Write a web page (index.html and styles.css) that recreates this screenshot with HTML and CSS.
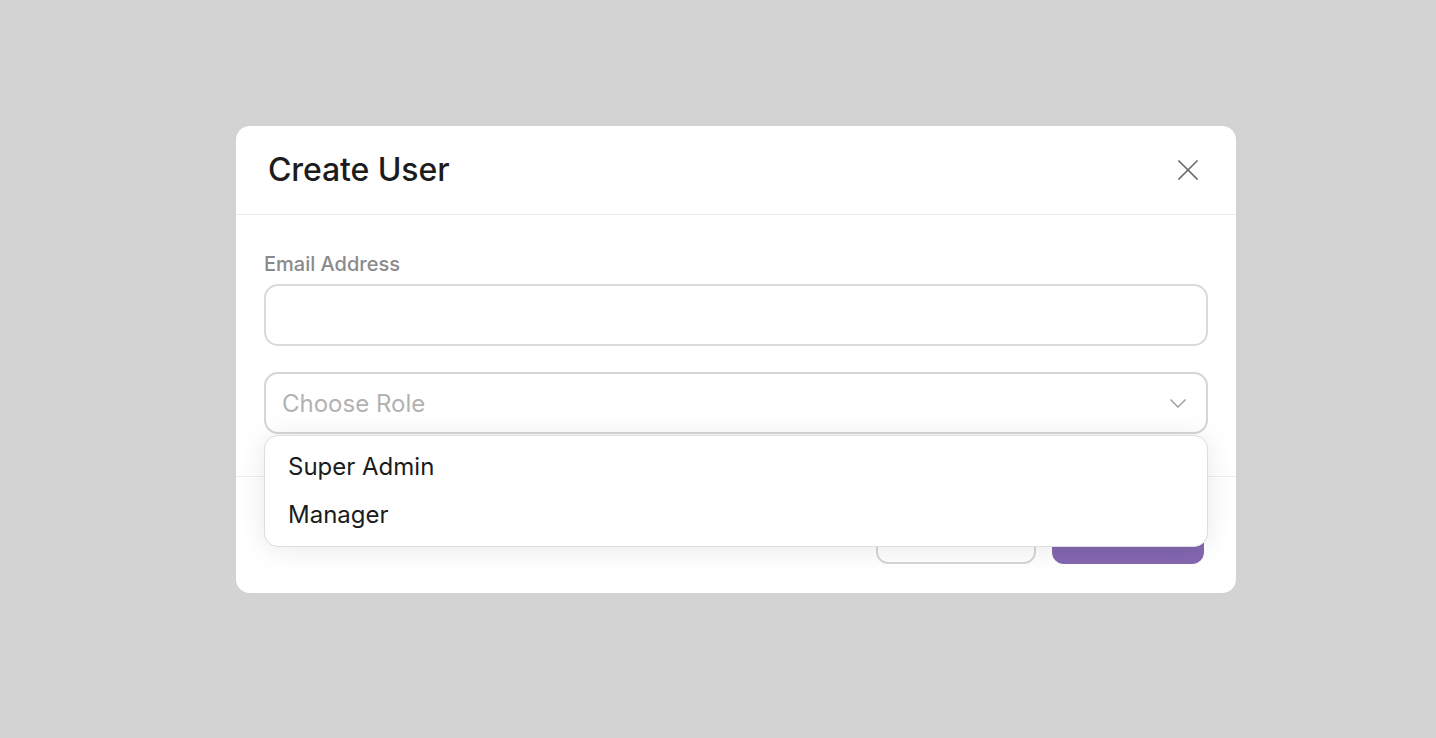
FILE: index.html
```html
<!DOCTYPE html>
<html lang="en">
<head>
<meta charset="utf-8">
<title>Create User</title>
<link rel="stylesheet" href="styles.css">
</head>
<body>
<div class="backdrop">
  <div class="modal">
    <div class="modal-header">
      <h2 class="modal-title">Create User</h2>
      <button class="close-btn" aria-label="Close">
        <svg width="20" height="20" viewBox="0 0 20 20" fill="none" stroke="#6f6f6f" stroke-width="1.6" stroke-linecap="square">
          <line x1="1" y1="1" x2="19" y2="19"/>
          <line x1="19" y1="1" x2="1" y2="19"/>
        </svg>
      </button>
    </div>
    <div class="modal-body">
      <div class="field">
        <label class="field-label">Email Address</label>
        <div class="text-input"></div>
      </div>
      <div class="select-wrap">
        <div class="select">
          <span class="placeholder">Choose Role</span>
          <svg class="chevron" width="16" height="9" viewBox="0 0 16 9" fill="none" stroke="#9a9a9a" stroke-width="1.4">
            <polyline points="0.5,0.5 8,8 15.5,0.5"/>
          </svg>
        </div>
        <ul class="dropdown">
          <li class="option">Super Admin</li>
          <li class="option">Manager</li>
        </ul>
      </div>
    </div>
    <div class="modal-footer">
      <button class="btn btn-outline">Cancel</button>
      <button class="btn btn-primary">Create</button>
    </div>
  </div>
</div>
</body>
</html>
```

FILE: styles.css
```css
* { box-sizing: border-box; }

html, body {
  margin: 0;
  height: 100%;
}

body {
  background: #d3d3d3;
  font-family: Inter, "Noto Sans", "Liberation Sans", sans-serif;
  color: #1c1c1c;
}

.backdrop {
  display: flex;
  align-items: flex-start;
  padding: 126px 0 0 236px;
  min-height: 100%;
}

.modal {
  width: 1000px;
  background: #ffffff;
  border-radius: 14px;
  display: flex;
  flex-direction: column;
}

.modal-header {
  height: 89px;
  display: flex;
  align-items: center;
  justify-content: space-between;
  padding: 0 38px 1px 32px;
  border-bottom: 1px solid #ececec;
}

.modal-title {
  margin: 0;
  font-size: 32px;
  font-weight: 500;
  letter-spacing: -0.1px;
  color: #1c1c1c;
}

.close-btn {
  background: none;
  border: 0;
  padding: 0;
  width: 20px;
  height: 20px;
  display: flex;
}

.modal-body {
  padding: 37px 28px 42px;
  display: flex;
  flex-direction: column;
  gap: 26px;
}

.field {
  display: flex;
  flex-direction: column;
  gap: 7px;
}

.field-label {
  font-size: 20px;
  line-height: 25px;
  font-weight: 500;
  color: #8a8a8a;
}

.text-input {
  height: 62px;
  border: 2px solid #dadada;
  border-radius: 14px;
  background: #fff;
}

.select-wrap {
  position: relative;
}

.select {
  height: 62px;
  border: 2px solid #d6d6d6;
  border-radius: 14px;
  background: #fff;
  display: flex;
  align-items: center;
  justify-content: space-between;
  padding: 0 20px 0 16px;
}

.placeholder {
  font-size: 24px;
  color: #b2b2b2;
}

.chevron {
  display: block;
  margin-top: 1px;
}

.dropdown {
  position: absolute;
  left: 0;
  right: 0;
  top: 63px;
  margin: 0;
  list-style: none;
  padding: 6px 0 8px;
  background: #fff;
  border: 1px solid #dedede;
  border-radius: 14px;
  box-shadow: 0 2px 28px rgba(0, 0, 0, 0.09);
  z-index: 2;
}

.option {
  height: 48px;
  display: flex;
  align-items: center;
  padding-left: 23px;
  font-size: 24px;
  color: #1c1c1c;
}

.modal-footer {
  height: 117px;
  border-top: 1px solid #ececec;
  display: flex;
  justify-content: flex-end;
  align-items: flex-end;
  gap: 16px;
  padding: 0 32px 29px;
}

.btn {
  height: 48px;
  border-radius: 12px;
  font-family: inherit;
  font-size: 18px;
  font-weight: 500;
}

.btn-outline {
  width: 160px;
  background: #fff;
  border: 2px solid #d6d6d6;
  color: #555;
}

.btn-primary {
  width: 152px;
  background: #8467b0;
  border: 0;
  color: #fff;
}
```
